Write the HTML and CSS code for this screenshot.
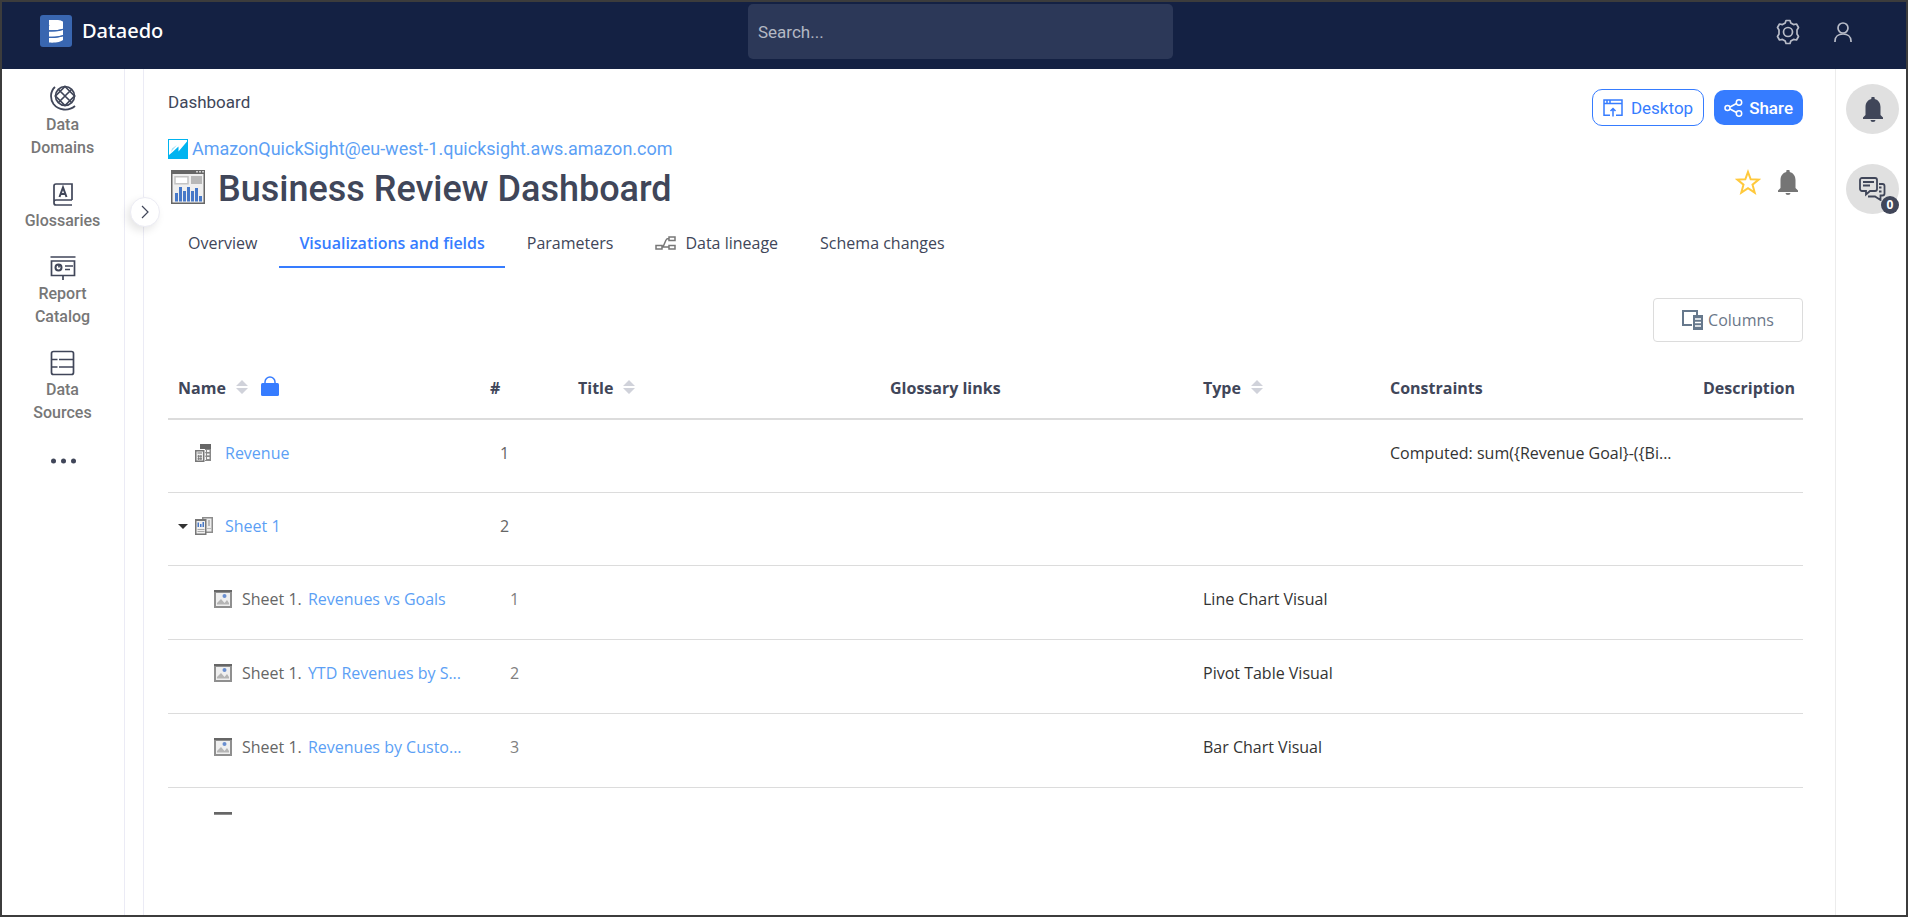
FILE: index.html
```html
<!DOCTYPE html>
<html lang="en">
<head>
<meta charset="utf-8">
<title>Business Review Dashboard - Dataedo</title>
<link rel="stylesheet" href="styles.css">
</head>
<body>
<svg class="defs" aria-hidden="true">
  <symbol id="i-bell" viewBox="0 0 20 25"><path d="M8.3 1.3a1.7 1.7 0 0 1 3.4 0v.6C15.500 2.800 17.500 6 17.500 10v8l2.500 2.500V22H0v-1.500L2.500 18v-8C2.500 6 4.500 2.800 8.300 1.900zM7.500 23h5a2.500 2 0 0 1-5 0z"/></symbol>
  <symbol id="i-sort" viewBox="0 0 12 14"><path d="M6 0l6 6H0zM0 8h12l-6 6z"/></symbol>
  <symbol id="i-visual" viewBox="0 0 18 18"><path fill="#8f8f8f" d="M0 0h18v18H0z"/><path fill="#666" d="M0 0h18v2H0z"/><path fill="#efefef" d="M2 3h14v13H2z"/><path fill="#b5b5b5" d="M3 14.500V13l4-4 3.500 4L13 10l2 3v1.500z"/><circle cx="10.500" cy="6" r="2" fill="#6a8fd0"/></symbol>
</svg>
<header class="topbar">
  <a class="brand" href="#">
    <svg width="32" height="32" viewBox="0 0 32 32"><rect width="32" height="32" rx="3" fill="#3966b0"/><g fill="#fff"><path d="M9 5h8c3 0 6 1 6 2v7c-4 1-9 1.500-14 1.200z"/><path d="M9 16.500c5 .3 10-.2 14-1.500v5c-4 1.500-9 2-14 1.700z"/><path d="M9 23c5 .3 10-.2 14-1.700V25c-2 2-8 3-14 2.500z"/></g><path fill="none" stroke="#3966b0" stroke-width="1.200" d="M9 10.500V10M9 15.800c5 .3 10-.3 14-1.500M9 22.300c5 .3 10-.3 14-1.500"/></svg>
    <span>Dataedo</span>
  </a>
  <input class="search" type="text" placeholder="Search..." aria-label="Search">
  <div class="account">
    <button aria-label="Settings"><svg width="24" height="26" viewBox="0 0 24 26" fill="none" stroke="currentColor" stroke-width="1.700" stroke-linejoin="round"><path d="M10 1.500h4l.8 2.500 2.700 1.600L20.500 5l2 3.500-1.500 2.500v4l1.500 2.500-2 3.500-3-.6-2.700 1.600-.8 2.500h-4L9.200 22l-2.700-1.600-3 .6-2-3.500L3 15v-4L1.500 8.500l2-3.500 3 .6L9.200 4z"/><circle cx="12" cy="13" r="4.500"/></svg></button>
    <button aria-label="Profile"><svg width="18" height="20" viewBox="0 0 18 20" fill="none" stroke="currentColor" stroke-width="1.700"><circle cx="9" cy="6" r="5"/><path d="M1 20v-1c0-4.500 3.500-7 8-7s8 2.500 8 7v1"/></svg></button>
  </div>
</header>
<div class="shell">
  <nav class="sidebar">
    <a href="#"><svg width="26" height="26" viewBox="0 0 26 26" fill="none" stroke="currentColor" stroke-width="1.700"><circle cx="15" cy="11" r="9.500"/><path d="M8.500 4.500l13 13M21.500 4.500l-13 13M15 1.500l9.500 9.500L15 20.500 5.500 11z"/><path d="M5 2C0 6.500 0 14 3.500 19c5 6.500 15 7.500 21.500 2" stroke-width="1.800"/></svg><span>Data<br>Domains</span></a>
    <a href="#"><svg width="26" height="26" viewBox="0 0 26 26" fill="none" stroke="currentColor" stroke-width="1.700"><path d="M22 19V3H6a2 2 0 0 0-2 2v17a2 2 0 0 0 2 2h16M22 19H6a2 2 0 0 0-2 2"/><path d="M9.500 16L13 6.500 16.500 16M10.700 13h4.600" stroke-width="2"/></svg><span>Glossaries</span></a>
    <a href="#"><svg width="26" height="26" viewBox="0 0 26 26" fill="none" stroke="currentColor" stroke-width="1.700"><path d="M.5 3h25M1.500 7h23v14.500h-23zM13 21.500V26M15 12h8M15 15.500h5"/><circle cx="8.500" cy="13.500" r="3" stroke-width="2"/><path d="M9 13.500V11"/></svg><span>Report<br>Catalog</span></a>
    <a href="#"><svg width="26" height="26" viewBox="0 0 26 26" fill="none" stroke="currentColor" stroke-width="1.700"><rect x="2.500" y="1.500" width="22" height="23" rx="2"/><path d="M2.500 9.500h6M10 9.500h14.500M2.500 17h6M10 17h14.500"/></svg><span>Data<br>Sources</span></a>
    <button aria-label="More"><svg width="26" height="26" viewBox="0 0 26 26" fill="currentColor"><circle cx="3.500" cy="15" r="2.500"/><circle cx="13.500" cy="15" r="2.500"/><circle cx="23.500" cy="15" r="2.500"/></svg></button>
  </nav>
  <div class="tree">
    <button class="expand" aria-label="Expand"><svg width="8" height="14" viewBox="0 0 8 14" fill="none" stroke="currentColor" stroke-width="1.200"><path d="M1 1l6 6-6 6"/></svg></button>
  </div>
  <main class="content">
    <div class="bar">
      <span class="kind">Dashboard</span>
      <div class="actions">
        <button class="desktop"><svg width="20" height="18" viewBox="0 0 20 18" fill="none" stroke="currentColor" stroke-width="1.500"><path d="M7 16.200H1V1h18v15.200h-6M1 4.500h18M4 1v3.500M7 1v3.500M10 17.500V10M7.500 12L10 9.500l2.500 2.500"/></svg>Desktop</button>
        <button class="share"><svg width="19" height="18" viewBox="0 0 19 18" fill="none" stroke="currentColor" stroke-width="1.500"><circle cx="3.500" cy="9" r="2.500"/><circle cx="15" cy="3.500" r="2.700"/><circle cx="15" cy="14.500" r="2.700"/><path d="M6 8l6.500-3.500M6 10l6.500 3.500"/></svg>Share</button>
      </div>
    </div>
    <div class="source">
      <svg width="20" height="20" viewBox="0 0 20 20"><path fill="#00b4f0" d="M0 0h20v20H0z"/><path fill="#fff" d="M1 1h18v1.500L10.500 12.500 10.500 7.500 4 13.500 1 16z"/><path fill="#a5e2f9" d="M4 9.500L9 6 3 13z"/></svg>
      <a href="#">AmazonQuickSight@eu-west-1.quicksight.aws.amazon.com</a>
    </div>
    <div class="heading">
      <svg width="34" height="34" viewBox="0 0 34 34"><path fill="#666" d="M0 0h34v34H0z"/><path fill="#efefef" d="M1.500 4h31v28.500h-31z"/><path fill="#fff" stroke="#c4c4c4" stroke-width="1.500" d="M4 6.800h13v7H4z"/><path fill="#b8b8b8" d="M20 6h11v8H20z"/><path fill="#ccc" d="M25 1h2v1.500h-2zM28 1h2v1.500h-2zM31 1h2v1.500h-2z"/><path fill="#4678c8" d="M4 23h3v8.500H4zM8 17h3v14.500H8zM12 21h3v10.500h-3zM16 17h3v14.500h-3zM20 21h3v10.500h-3zM24 18h3v13.500h-3zM28 26h3v5.500h-3z"/></svg>
      <h1>Business Review Dashboard</h1>
      <div class="marks">
        <button class="star" aria-label="Add to favourites"><svg width="26" height="26" viewBox="0 0 26 26" fill="none" stroke="currentColor" stroke-width="2"><path d="M13 3l2.700 7.300 8 .3-6.200 5 2.200 8L13 19.200l-6.700 4.400 2.200-8-6.200-5 8-.3z"/></svg></button>
        <button class="follow" aria-label="Follow"><svg width="20" height="25"><use href="#i-bell"/></svg></button>
      </div>
    </div>
    <nav class="tabs">
      <a href="#">Overview</a>
      <a class="active" href="#">Visualizations and fields</a>
      <a href="#">Parameters</a>
      <a href="#"><svg width="21" height="14" viewBox="0 0 21 14" fill="none" stroke="#777" stroke-width="1.500"><path d="M1 9.500h6v3.500H1zM14 9.500h6v3.500h-6zM14 1h6v3.500h-6zM7 11h7M8 11l3-7c.5-1.300 1-1.500 3-1.500"/></svg>Data lineage</a>
      <a href="#">Schema changes</a>
    </nav>
    <div class="toolbar">
      <button class="columns"><svg width="21" height="20" viewBox="0 0 21 20"><path fill="none" stroke="#66788c" stroke-width="2" d="M10 15H1V1h14v4"/><path fill="#66788c" d="M11 5h10v15H11z"/><path stroke="#fff" stroke-width="1.500" d="M13 9h6M13 12.500h6M13 16h6"/></svg>Columns</button>
    </div>
    <div class="grid">
      <table>
        <colgroup><col class="w-name"><col class="w-num"><col class="w-title"><col class="w-wide"><col class="w-type"><col class="w-wide"><col></colgroup>
        <thead>
          <tr>
            <th><div class="label">Name<svg class="sort" width="12" height="14"><use href="#i-sort"/></svg><svg class="lock" width="18" height="20" viewBox="0 0 18 20"><rect y="7" width="18" height="13" rx="1.500" fill="#367cff"/><path d="M4 8V6a5 5 0 0 1 10 0v2" fill="none" stroke="#367cff" stroke-width="1.500"/></svg></div></th>
            <th>#</th>
            <th><div class="label">Title<svg class="sort" width="12" height="14"><use href="#i-sort"/></svg></div></th>
            <th>Glossary links</th>
            <th><div class="label">Type<svg class="sort" width="12" height="14"><use href="#i-sort"/></svg></div></th>
            <th>Constraints</th>
            <th>Description</th>
          </tr>
        </thead>
        <tbody>
          <tr>
            <td><div class="name"><span class="caret"></span><svg width="18" height="18" viewBox="0 0 18 18"><path fill="#666" d="M5 0h11v5H5z"/><path fill="#888" d="M5 5h11v12H5z"/><path fill="#f4f4f4" d="M6 6h5v10H6zM12 6h2.500v2H12zM12 9.500h2.500v2H12zM12 13h2.500v2H12z"/><path stroke="#888" d="M9 8.700h6M9 12.200h6"/><path fill="#fff" d="M0 5h10v13H0z"/><path fill="#777" d="M0 6h9.500v12H0z"/><path fill="#eee" d="M1.500 7.500H8v9H1.500z"/><path stroke="#777" fill="none" d="M2.500 9H7M3.700 11v5M5.900 11v5M2.500 12.200H7M2.500 14.800H7"/></svg><a href="#">Revenue</a></div></td>
            <td>1</td><td></td><td></td><td></td><td>Computed: sum({Revenue Goal}-({Bi...</td><td></td>
          </tr>
          <tr>
            <td><div class="name"><button class="caret" aria-label="Collapse"><svg width="10" height="5" viewBox="0 0 10 5"><path d="M0 0h10L5 5z" fill="#333"/></svg></button><svg width="18" height="18" viewBox="0 0 18 18"><path fill="#8c8c8c" d="M7 0h11v16H7z"/><path fill="#eee" d="M8.500 1.500h8v13h-8z"/><path fill="#bbb" d="M13 3h2v6h-2zM12 11h4v1h-4z"/><path fill="#777" d="M0 2h11.500v16H0z"/><path fill="#f0f0f0" d="M1.500 4H10v12.500H1.500z"/><path fill="#4678c8" d="M2.500 5.500H4V10H2.500zM5 7h1.500v3H5zM7.500 5H9v5H7.500z"/><path stroke="#aaa" d="M2.500 12.500h7M2.500 14.500h7"/></svg><a href="#">Sheet 1</a></div></td>
            <td>2</td><td></td><td></td><td></td><td></td><td></td>
          </tr>
          <tr class="sub">
            <td><div class="name"><svg width="18" height="18"><use href="#i-visual"/></svg><span>Sheet 1. <a href="#">Revenues vs Goals</a></span></div></td>
            <td>1</td><td></td><td></td><td>Line Chart Visual</td><td></td><td></td>
          </tr>
          <tr class="sub">
            <td><div class="name"><svg width="18" height="18"><use href="#i-visual"/></svg><span>Sheet 1. <a href="#">YTD Revenues by S...</a></span></div></td>
            <td>2</td><td></td><td></td><td>Pivot Table Visual</td><td></td><td></td>
          </tr>
          <tr class="sub">
            <td><div class="name"><svg width="18" height="18"><use href="#i-visual"/></svg><span>Sheet 1. <a href="#">Revenues by Custo...</a></span></div></td>
            <td>3</td><td></td><td></td><td>Bar Chart Visual</td><td></td><td></td>
          </tr>
          <tr class="sub">
            <td><div class="name"><svg width="18" height="18"><use href="#i-visual"/></svg></div></td>
            <td></td><td></td><td></td><td></td><td></td><td></td>
          </tr>
        </tbody>
      </table>
    </div>
  </main>
  <aside class="rail">
    <button aria-label="Notifications"><svg width="20" height="25"><use href="#i-bell"/></svg></button>
    <button aria-label="Comments"><svg width="27" height="24" viewBox="0 0 27 24" fill="none" stroke="currentColor" stroke-width="1.800"><path d="M3 1h13a2 2 0 0 1 2 2v9a2 2 0 0 1-2 2h-5l-4 3.500V14H3a2 2 0 0 1-2-2V3a2 2 0 0 1 2-2z"/><path d="M4 5h11M4 8.500h7"/><path d="M20 7h3.500a2 2 0 0 1 2 2v7.500a2 2 0 0 1-2 2h-2V23L16 19.500H9M20 10.500h2.500M20 14.500h2.500"/></svg><span class="badge">0</span></button>
  </aside>
</div>
</body>
</html>
```
FILE: styles.css
```css
* { box-sizing: border-box; }
:root {
  --ui: Roboto, "Liberation Sans", sans-serif;
  --text: "Open Sans", "Noto Sans", sans-serif;
  --ink: #404659;
  --line: #dcdcdc;
  --link: #5c9ff5;
  --blue: #367cff;
}
body {
  margin: 0;
  height: 100vh;
  display: flex;
  flex-direction: column;
  overflow: hidden;
  border: 2px solid #3c3c3c;
  background: #fff;
  color: var(--ink);
  font: 16px/24px var(--text);
}
a { color: var(--link); text-decoration: none; }
button { padding: 0; border: 0; background: none; color: inherit; font: inherit; }
svg { display: block; flex: none; }
.defs { position: absolute; width: 0; height: 0; }

.topbar {
  display: grid;
  grid-template-columns: 1fr 425px 1fr;
  padding: 2px 25px 10px 38px;
  background: #142143;
  align-items: center;
}
.brand { display: flex; align-items: center; gap: 10px; margin-bottom: 2px; color: #fff; font: 500 20px/30px "Noto Sans", sans-serif; }
.search {
  width: 100%;
  height: 55px;
  padding: 0 10px;
  border: 0;
  border-radius: 5px;
  background: #2c3858;
  color: #fff;
  font: 17px/24px var(--ui);
}
.search::placeholder { color: #b4b8c4; opacity: 1; }
.account { display: flex; justify-content: flex-end; align-items: center; gap: 34px; padding-right: 29px; color: #b8bcc8; }

.shell { flex: 1; min-height: 0; display: flex; }
.sidebar {
  width: 123px;
  display: flex;
  flex-direction: column;
  align-items: center;
  gap: 22px;
  padding: 16px 1px 0 0;
  border-right: 1px solid #ebebf5;
}
.sidebar a, .sidebar button { display: flex; flex-direction: column; align-items: center; gap: 2px; color: var(--ink); }
.sidebar span { color: #777; font: 500 16px/23px var(--ui); text-align: center; }
.tree { position: relative; width: 19px; border-right: 1px solid #ebebf5; }
.expand {
  position: absolute;
  top: 128px;
  left: 5px;
  display: grid;
  place-items: center;
  width: 30px;
  height: 30px;
  border: 1px solid #ececf4;
  border-radius: 50%;
  background: #fff;
  box-shadow: -3px 4px 8px #0000001a;
}

.content { flex: 1; min-width: 0; display: flex; flex-direction: column; padding: 20px 32px 100px 24px; }
.bar { display: flex; align-items: center; justify-content: space-between; }
.kind { font: 17px/24px var(--ui); margin-bottom: 12px; }
.actions { display: flex; align-items: center; gap: 10px; }
.actions button { display: flex; align-items: center; gap: 8px; border-radius: 10px; font: 17px/24px var(--ui); }
.actions .desktop { height: 37px; padding: 0 10px; border: 1px solid var(--blue); color: var(--blue); }
.actions .share { gap: 6px; height: 35px; padding: 0 10px; background: var(--blue); color: #fff; font-weight: 500; }
.source { display: flex; align-items: center; gap: 4px; margin-top: 12px; font: 18px/22px var(--ui); }
.heading { display: flex; align-items: center; gap: 13px; height: 54px; padding-left: 3px; }
h1 { margin: 0; padding-top: 3px; font: 500 36px/48px var(--ui); }
.marks { display: flex; align-items: center; gap: 17px; margin: 0 5px 10px auto; }
.star { color: #ffc93c; }
.marks .follow, .rail button { fill: currentColor; }
.follow { color: #757575; }

.tabs { display: flex; gap: 2px; margin-top: 4px; }
.tabs a { display: flex; align-items: center; gap: 9px; height: 50px; padding: 2px 20px 0; border-bottom: 2px solid transparent; color: var(--ink); }
.tabs .active { border-color: var(--blue); color: var(--blue); font-weight: 600; }
.toolbar { display: flex; justify-content: flex-end; margin: 30px 0 13px; }
.columns { display: flex; align-items: center; justify-content: center; gap: 5px; width: 150px; height: 44px; border: 1px solid var(--line); border-radius: 4px; color: #6b7789; }

.grid { flex: 1; min-height: 0; overflow: hidden; }
table { width: 100%; table-layout: fixed; border-collapse: separate; border-spacing: 0; }
.w-name, .w-title { width: 312px; }
.w-wide { width: 313px; }
.w-num { width: 88px; }
.w-type { width: 187px; }
th { height: 65px; padding: 2px 0 0 10px; border-bottom: 2px solid var(--line); text-align: left; font-weight: 700; white-space: nowrap; }
.label { display: flex; align-items: center; }
.sort { margin: 0 0 2px 10px; fill: #d0d2da; }
.lock { margin: 0 0 3px 13px; }
td { height: 73px; padding: 21px 0 0 10px; border-bottom: 1px solid var(--line); vertical-align: top; white-space: nowrap; color: #333; }
td:nth-child(2) { padding-left: 20px; color: #666; }
.name { display: flex; align-items: center; color: #666; }
.name svg + a { margin-left: 12px; }
.caret { width: 17px; }
.sub td { height: 74px; }
.sub td:nth-child(2) { padding-left: 30px; color: #808080; }
.sub .name { gap: 10px; padding-left: 36px; min-height: 24px; }
.sub .name a { margin-left: 2px; }

.rail { width: 71px; display: flex; flex-direction: column; align-items: flex-end; gap: 30px; padding: 15px 7px 0 0; border-left: 1px solid #ececec; }
.rail button { position: relative; display: grid; place-items: center; width: 53px; height: 50px; border-radius: 50%; background: #e0e0e0; color: var(--ink); }
.rail [fill="none"] { fill: none; }
.badge { position: absolute; right: 0; bottom: 0; width: 18px; height: 18px; border-radius: 9px; background: var(--ink); color: #fff; font: 700 12px/18px var(--text); text-align: center; }
```
